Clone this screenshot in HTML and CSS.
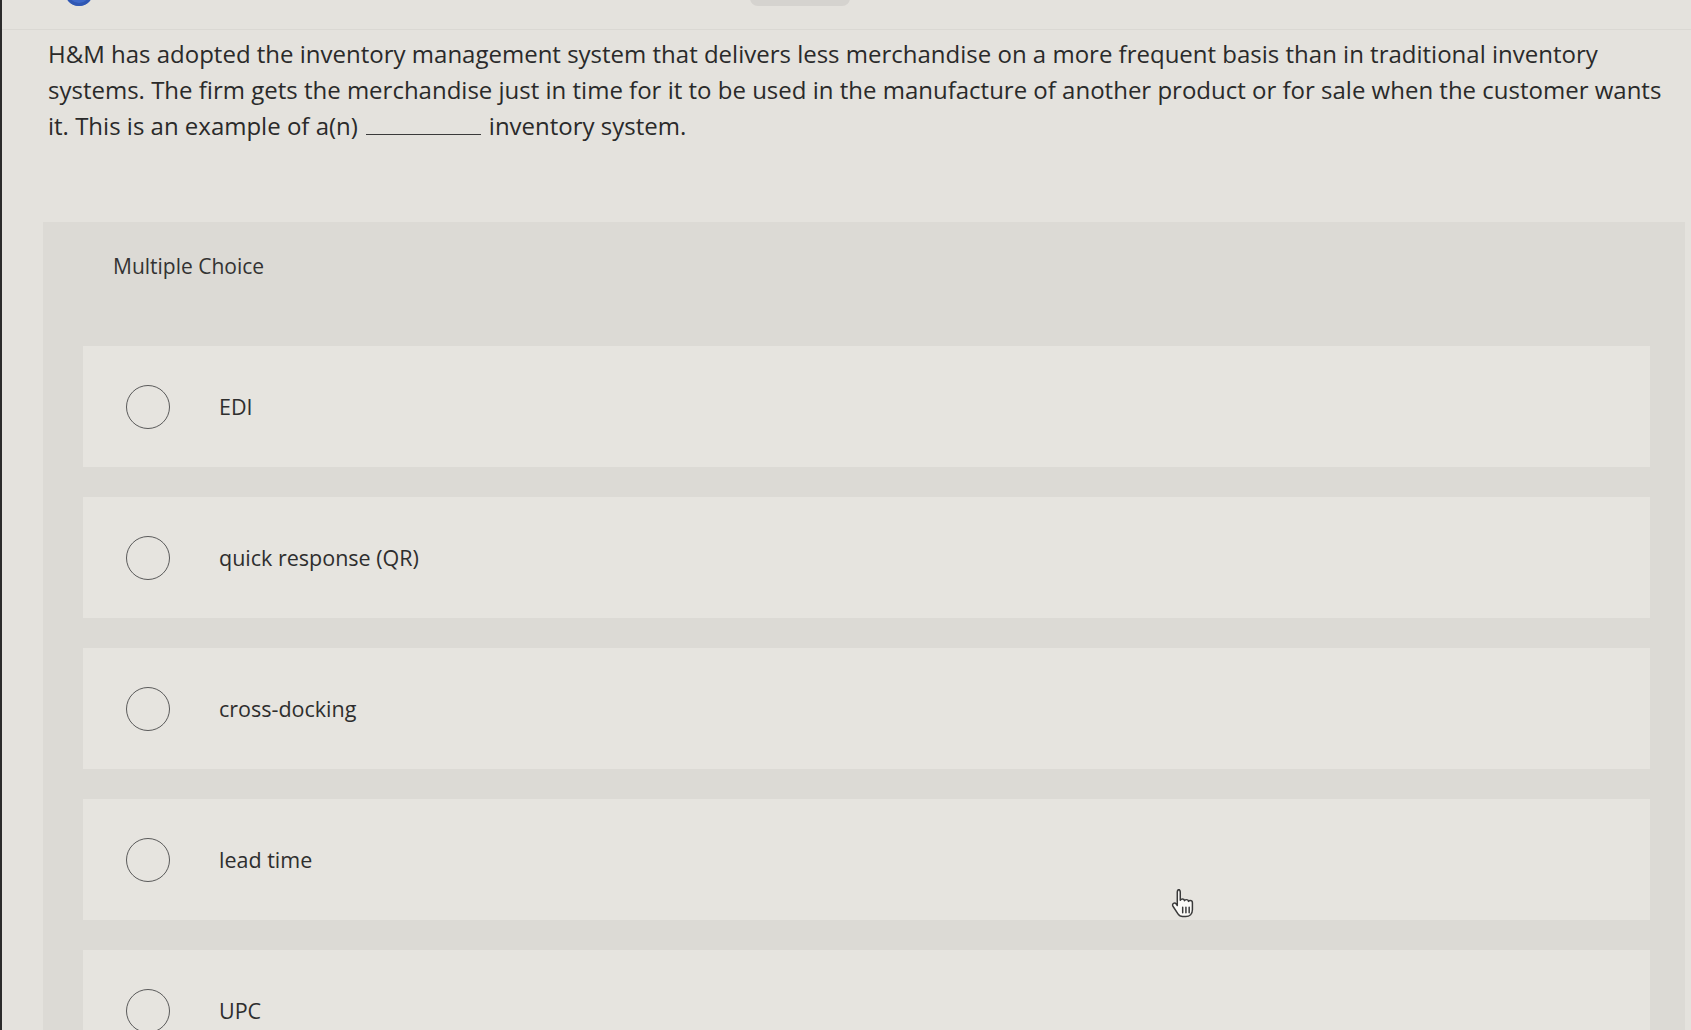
FILE: index.html
```html
<!DOCTYPE html>
<html lang="en">
<head>
<meta charset="utf-8">
<title>Multiple Choice</title>
<link rel="stylesheet" href="styles.css">
</head>
<body>
<div class="page">
  <div class="topbar">
    <span class="avatar"></span>
    <span class="pill"></span>
  </div>
  <p class="question">H&amp;M has adopted the inventory management system that delivers less merchandise on a more frequent basis than in traditional inventory<br>systems. The firm gets the merchandise just in time for it to be used in the manufacture of another product or for sale when the customer wants<br>it. This is an example of a(n)<span class="blank"></span>inventory system.</p>
  <section class="mc">
    <div class="mc-head">Multiple Choice</div>
    <div class="options">
      <label class="option"><span class="radio"></span><span class="opt-text">EDI</span></label>
      <label class="option"><span class="radio"></span><span class="opt-text">quick response (QR)</span></label>
      <label class="option"><span class="radio"></span><span class="opt-text">cross-docking</span></label>
      <label class="option"><span class="radio"></span><span class="opt-text">lead time</span></label>
      <label class="option"><span class="radio"></span><span class="opt-text">UPC</span></label>
    </div>
  </section>
  <svg class="cursor" viewBox="0 0 20 22" width="27" height="30" aria-hidden="true">
    <path d="M6 1.2c.9 0 1.6.7 1.6 1.6V9c.3-.6 1-.9 1.6-.9.8 0 1.4.5 1.5 1.2.3-.5.9-.8 1.5-.8.8 0 1.4.6 1.5 1.3.3-.4.8-.6 1.3-.6.9 0 1.6.7 1.6 1.6V16c0 3-2 5-5 5H9.4c-1.6 0-2.7-.7-3.5-2L2.2 13.4c-.5-.8-.3-1.7.4-2.1.7-.4 1.5-.2 2 .4l.8 1.2V2.8c0-.9.7-1.6 1.6-1.6z" fill="#fbfaf7" stroke="#3a3a3a" stroke-width="1.1" stroke-linejoin="round"/>
    <path d="M9.4 14.2v4M11.8 14.2v4M14.2 14.2v4" stroke="#3a3a3a" stroke-width="1.1" stroke-linecap="round"/>
  </svg>
</div>
</body>
</html>
```
FILE: styles.css
```css
html, body {
  margin: 0;
  padding: 0;
  background: #e4e2dd;
}

body {
  font-family: "Open Sans", Lato, "Liberation Sans", sans-serif;
  color: #2a2a2a;
  overflow: hidden;
}

.page {
  position: relative;
  height: 1030px;
  overflow: hidden;
  border-left: 2px solid #2b2b2b;
  box-sizing: border-box;
}

.topbar {
  height: 30px;
  border-bottom: 1px solid #dad8d3;
  display: flex;
  align-items: flex-start;
  padding-left: 63px;
  box-sizing: border-box;
}

.avatar {
  width: 28px;
  height: 28px;
  margin-top: -22px;
  border-radius: 50%;
  background: #3d68c9;
  box-shadow: inset 0 0 0 3px #2f57b3;
}

.pill {
  width: 100px;
  height: 28px;
  margin-top: -22px;
  margin-left: 657px;
  border-radius: 8px;
  background: #d5d3cf;
}

.question {
  margin: 6px 0 0 46px;
  width: 1640px;
  font-size: 24px;
  line-height: 36px;
}

.blank {
  display: inline-block;
  width: 115px;
  height: 0;
  border-bottom: 1.5px solid #3a3a3a;
  margin: 0 8px;
}

.mc {
  margin: 78px 6px 0 41px;
  background: #dcdad5;
}

.mc-head {
  padding: 32px 70px 0;
  font-size: 21px;
  line-height: 24px;
  color: #333;
}

.options {
  display: flex;
  flex-direction: column;
  gap: 30px;
  padding: 68px 35px 0 40px;
}

.option {
  display: flex;
  align-items: center;
  height: 121px;
  padding-left: 43px;
  background: #e6e4df;
}

.radio {
  width: 42px;
  height: 42px;
  border: 1.8px solid #5a5a5a;
  border-radius: 50%;
  flex: none;
}

.opt-text {
  margin-left: 49px;
  font-size: 21.5px;
  color: #2e2e2e;
}

.cursor {
  position: absolute;
  left: 1168px;
  top: 888px;
}
```
